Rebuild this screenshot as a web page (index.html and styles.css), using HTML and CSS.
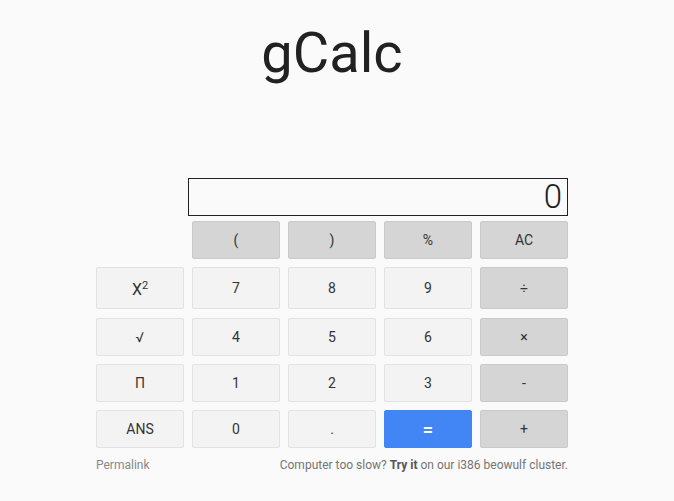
FILE: index.html
```html
<!DOCTYPE html>
<html lang="en">
<head>
  <meta charset="UTF-8">
  <meta name="viewport" content="width=device-width, initial-scale=1.0">
  <title>gCalc</title>
  <link rel="stylesheet" href="styles.css">
</head>
<body>

  <div class="page">
    <h1 class="title">gCalc</h1>

    <div class="calc">
      <div class="screen" id="screen">0</div>

      <div class="keys">
        <div class="blank"></div>
        <button class="key dark">(</button>
        <button class="key dark">)</button>
        <button class="key dark">%</button>
        <button class="key dark">AC</button>

        <button class="key tall square">X<sup>2</sup></button>
        <button class="key tall">7</button>
        <button class="key tall">8</button>
        <button class="key tall">9</button>
        <button class="key dark tall">÷</button>

        <button class="key">√</button>
        <button class="key">4</button>
        <button class="key">5</button>
        <button class="key">6</button>
        <button class="key dark">×</button>

        <button class="key">Π</button>
        <button class="key">1</button>
        <button class="key">2</button>
        <button class="key">3</button>
        <button class="key dark">-</button>

        <button class="key">ANS</button>
        <button class="key">0</button>
        <button class="key">.</button>
        <button class="key equals">=</button>
        <button class="key dark">+</button>
      </div>

      <div class="footer">
        <a class="permalink" href="#">Permalink</a>
        <span>Computer too slow? <b>Try it</b> on our i386 beowulf cluster.</span>
      </div>
    </div>
  </div>

</body>
</html>
```

FILE: styles.css
```css
body {
  margin: 0;
  background-color: #fafafa;
  font-family: Roboto, "Liberation Sans", Arial, sans-serif;
  color: #212121;
}

.page {
  max-width: 664px;
}

.title {
  margin: 20px 0 0;
  font-size: 56px;
  font-weight: 400;
  text-align: center;
  line-height: 66px;
}

.calc {
  width: 472px;
  margin: 92px auto 0;
}

.screen {
  box-sizing: border-box;
  width: 380px;
  height: 38px;
  margin: 0 0 5px 92px;
  padding: 0 5px;
  border: 1px solid #222;
  text-align: right;
  font-size: 33px;
  line-height: 36px;
  font-weight: 300;
}

.keys {
  display: grid;
  grid-template-columns: repeat(5, 88px);
  grid-template-rows: 38px 43px 38px 38px 38px;
  column-gap: 8px;
  row-gap: 8px;
}

.key {
  align-self: start;
  height: 38px;
  padding: 0;
  border: 1px solid #e2e2e2;
  border-radius: 2px;
  background-color: #f3f3f3;
  color: #333;
  font-family: inherit;
  font-size: 14px;
  cursor: pointer;
}

.key.tall {
  height: 42px;
}

.key.square {
  font-size: 16px;
  padding-top: 2px;
}

.key sup {
  font-size: 11px;
  line-height: 0;
}

.key.dark {
  background-color: #d5d5d5;
  border-color: #cacaca;
}

.key.equals {
  background-color: #4285f4;
  border-color: #4285f4;
  color: #fff;
  font-size: 18px;
  font-weight: 700;
}

.footer {
  display: flex;
  justify-content: space-between;
  margin-top: 10px;
  font-size: 12px;
  color: #757575;
}

.footer b {
  color: #555;
}

.permalink {
  color: #888;
  text-decoration: none;
}
```
